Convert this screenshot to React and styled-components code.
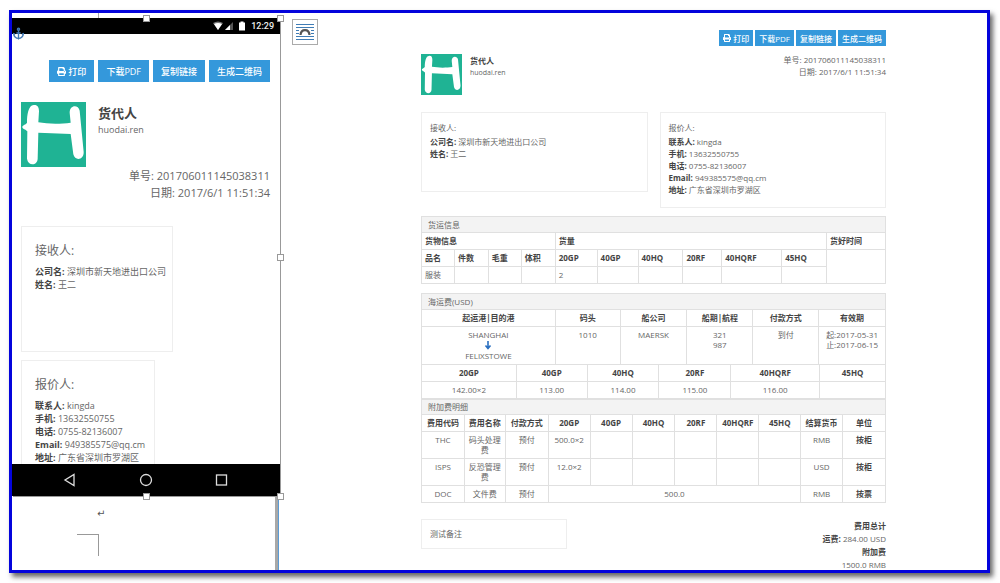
import React from 'react'
import styled, {createGlobalStyle} from 'styled-components'
import {FaPrint} from 'react-icons/fa'
import {Anchor} from 'lucide-react'

const GlobalStyle = createGlobalStyle`
  * {
    box-sizing: border-box;
  }

  body {
    margin: 0;
    background: #fff;
    color: #666;
    font-family: 'Open Sans', 'Noto Sans CJK SC', sans-serif;
    font-size: 8px;
    line-height: 12px;
  }

  p, h1, h2, h3 {
    margin: 0;
  }
`

const Frame = styled.div`
  display: grid;
  grid-template-columns: 268px minmax(0, 1fr);
  grid-template-rows: minmax(0, 1fr);
  height: calc(100vh - 20px);
  margin: 10px 10px 10px 9px;
  border: 3px solid #0404dc;
  box-shadow: 3px 4px 5px rgba(0, 0, 0, 0.6);
  overflow: hidden;
`

/* left column: word document with the phone capture */
const Document = styled.div`
  display: flex;
  flex-direction: column;
  min-height: 0;
`

const PageTop = styled.div`
  flex: 0 0 5px;
  width: 87px;
  border-right: 1px solid #aaa;
`

const Phone = styled.div`
  position: relative;
  flex: 1;
  min-height: 0;
  display: flex;
  flex-direction: column;
  box-shadow: 1px 1px 0 #999;
`

const StatusBar = styled.div`
  display: flex;
  flex: 0 0 16px;
  align-items: center;
  justify-content: flex-end;
  gap: 6px;
  padding-right: 6px;
  background: #000;
  color: #eee;
  font-family: Roboto, sans-serif;
  font-size: 9px;
  font-weight: 500;
`

const Screen = styled.div`
  flex: 1;
  min-height: 0;
  padding: 26px 10px 0 9px;
  overflow: hidden;
`

const NavBar = styled.div`
  display: flex;
  flex: 0 0 32px;
  align-items: center;
  justify-content: space-between;
  padding: 0 52px 0 51px;
  background: #000;
`

const NavButton = styled.button`
  display: flex;
  padding: 0;
  border: none;
  background: none;
`

const Handle = styled.span`
  position: absolute;
  left: ${props => props.$x};
  top: ${props => props.$y};
  width: 7px;
  height: 7px;
  margin: -3px;
  border: 1px solid #999;
  background: #fff;
`

const AnchorMark = styled.span`
  position: absolute;
  left: 0;
  top: 9px;
  display: flex;
  color: #3f78b5;
`

const DocTail = styled.div`
  flex: 0 0 74px;
  padding: 12px 0 0 65px;
  margin-right: 1px;
  color: #555;
  font-family: 'DejaVu Sans', sans-serif;
  font-size: 10px;
  box-shadow: inset -1px 0 #5b9bd5, inset -4px 0 #a8a8a8;
`

const ReturnMark = styled.p`
  padding-left: 20px;
`

const Corner = styled.div`
  width: 22px;
  height: 22px;
  margin-top: 14px;
  border-top: 1px solid #999;
  border-right: 1px solid #999;
`

/* shared by the phone and the sheet */
const Toolbar = styled.div`
  display: flex;
  justify-content: flex-end;
  gap: ${props => props.$large ? '4px' : '2px'};
`

const Button = styled.button`
  display: flex;
  align-items: center;
  gap: 2px;
  height: ${props => props.$large ? '22px' : '16px'};
  padding: 0 ${props => props.$large ? '8px' : '4px'};
  border: none;
  background: #3498db;
  color: #fff;
  font-family: inherit;
  font-size: ${props => props.$large ? '9px' : '8px'};
  font-weight: 500;
  white-space: nowrap;
`

const Brand = styled.div`
  display: flex;
  gap: ${props => props.$large ? '12px' : '8px'};
  margin-top: ${props => props.$large ? '20px' : '0'};

  svg {
    flex: none;
    width: ${props => props.$large ? '65px' : '41px'};
    height: ${props => props.$large ? '65px' : '41px'};
  }

  h1 {
    color: #444;
    font-size: ${props => props.$large ? '13px' : '8px'};
    line-height: ${props => props.$large ? '22px' : '14px'};
  }

  p {
    font-size: ${props => props.$large ? '9px' : '7px'};
    line-height: ${props => props.$large ? '11px' : '10px'};
  }
`

const Meta = styled.div`
  text-align: right;
  font-size: ${props => props.$large ? '11px' : '8px'};
  line-height: ${props => props.$large ? '17px' : '12px'};
`

const Card = styled.section`
  border: 1px solid #eee;
  padding: 9px 8px 11px;

  h2 {
    margin-bottom: 2px;
    font-size: 8px;
    font-weight: 400;
    line-height: 12px;
  }

  b {
    color: #444;
  }
`

const PhoneCard = styled(Card)`
  width: ${props => props.$width};
  min-height: 126px;
  margin-bottom: 8px;
  padding: 15px 13px 12px;
  font-size: 9px;
  line-height: 13px;
  white-space: nowrap;

  h2 {
    margin-bottom: 5px;
    font-size: 12px;
    line-height: 18px;
  }
`

const PhoneMeta = styled(Meta)`
  margin-bottom: 25px;
`

/* right column: the quotation page */
const Main = styled.main`
  display: flex;
  align-items: flex-start;
  padding: 6px 101px 0 12px;
  min-width: 0;
`

const LayoutButton = styled.button`
  display: flex;
  flex: none;
  width: 26px;
  height: 26px;
  padding: 0;
  border: 1px solid #aaa;
  background: #fff;
`

const Sheet = styled.div`
  flex: 1;
  min-width: 0;
  margin-left: 103px;
  padding-top: 11px;
`

const SheetHead = styled.header`
  display: flex;
  justify-content: space-between;
  margin: 8px 0 17px;
`

const Cards = styled.div`
  display: grid;
  grid-template-columns: 1fr 1fr;
  gap: 12px;
  align-items: start;
  margin-bottom: 8px;

  section {
    min-height: 80px;
  }
`

const Panel = styled.section`
  margin-bottom: 9px;
`

const PanelTitle = styled.h3`
  padding: ${props => props.$slim ? '1px 6px' : '2px 6px 1px'};
  border: 1px solid #e0e0e0;
  border-bottom: none;
  background: #f3f3f3;
  font-size: 8px;
  font-weight: 400;
  line-height: 12px;
`

const Table = styled.table`
  width: 100%;
  table-layout: fixed;
  border-collapse: collapse;
  text-align: ${props => props.$left ? 'left' : 'center'};
  line-height: 10px;

  & + & {
    margin-top: -1px;
  }

  th, td {
    height: 17px;
    padding: 3px;
    border: 1px solid #e0e0e0;
    vertical-align: top;
  }

  th {
    color: #444;
    font-weight: 700;
    white-space: nowrap;
  }
`

const Arrow = styled.svg`
  display: block;
  margin: 0 auto;
`

const SheetFoot = styled.footer`
  display: flex;
  justify-content: space-between;
  align-items: flex-start;
  padding-top: 7px;
`

const Note = styled.p`
  width: 146px;
  padding: 8px;
  border: 1px solid #eee;
`

const Totals = styled.div`
  text-align: right;
  line-height: 13px;

  b {
    color: #444;
  }
`

const Logo = () => (
    <svg viewBox="0 0 195 195" role="img" aria-label="货代人">
        <rect width="195" height="195" fill="#1fb394"/>
        <path fill="#fff" d="M38 9C50 8 54 16 54 28L52 61C80 66 120 66 149 62L146 32C146 8 172 7 176 26L188 150C189 174 162 178 157 157L149 96L52 92L50 170C49 192 21 192 18 170L19 88C14 82 4 81 4 75C4 69 14 69 18 62C18 38 22 10 38 9Z"/>
    </svg>
)

const Actions = ({large}) => (
    <Toolbar $large={large}>
        <Button $large={large}><FaPrint/>打印</Button>
        <Button $large={large}>下载PDF</Button>
        <Button $large={large}>复制链接</Button>
        <Button $large={large}>生成二维码</Button>
    </Toolbar>
)

const Company = ({large}) => (
    <Brand $large={large}>
        <Logo/>
        <div>
            <h1>货代人</h1>
            <p>huodai.ren</p>
        </div>
    </Brand>
)

const Fields = ({rows}) => rows.map(([label, value]) => (
    <p key={label}><b>{label}:</b> {value}</p>
))

const Cols = ({widths}) => {
    const total = widths.reduce((a, b) => a + b, 0)
    return (
        <colgroup>
            {widths.map((w, i) => <col key={i} style={{width: `${w / total * 100}%`}}/>)}
        </colgroup>
    )
}

const receiver = [
    ['公司名', '深圳市新天地进出口公司'],
    ['姓名', '王二'],
]

const sender = [
    ['联系人', 'kingda'],
    ['手机', '13632550755'],
    ['电话', '0755-82136007'],
    ['Email', '949385575@qq.cm'],
    ['地址', '广东省深圳市罗湖区'],
]

const boxes = ['20GP', '40GP', '40HQ', '20RF', '40HQRF', '45HQ']
const prices = ['142.00×2', '113.00', '114.00', '115.00', '116.00', '']

const heads = list => list.map(text => <th key={text}>{text}</th>)
const cells = list => list.map((text, i) => <td key={i}>{text}</td>)

const PhoneShot = () => (
    <Phone>
        <StatusBar>
            <svg width="32" height="10" viewBox="0 0 32 10">
                <path d="M0 2Q5 -1 10 2L5 9Z" fill="#777"/>
                <path d="M1 3Q5 1 9 3L5 9Z" fill="#fff"/>
                <path d="M20 1V9H12Z" fill="#555"/>
                <path d="M17 4V9H12Z" fill="#fff"/>
                <path d="M26 1.500H27.500V.5H30.500V1.500H32V9.500H26Z" fill="#fff"/>
            </svg>
            12:29
        </StatusBar>
        <Screen>
            <Actions large/>
            <Company large/>
            <PhoneMeta $large>
                <p>单号: 201706011145038311</p>
                <p>日期: 2017/6/1 11:51:34</p>
            </PhoneMeta>
            <PhoneCard $width="61%">
                <h2>接收人:</h2>
                <Fields rows={receiver}/>
            </PhoneCard>
            <PhoneCard $width="54%">
                <h2>报价人:</h2>
                <Fields rows={sender}/>
            </PhoneCard>
        </Screen>
        <NavBar>
            <NavButton aria-label="back">
                <svg width="13" height="14" viewBox="0 0 13 14" fill="none" stroke="#ddd" strokeWidth="1.300"><path d="M11 1.500V12.500L2 7Z"/></svg>
            </NavButton>
            <NavButton aria-label="home">
                <svg width="14" height="14" viewBox="0 0 14 14" fill="none" stroke="#ddd" strokeWidth="1.300"><circle cx="7" cy="7" r="5.500"/></svg>
            </NavButton>
            <NavButton aria-label="recent">
                <svg width="13" height="14" viewBox="0 0 13 14" fill="none" stroke="#ddd" strokeWidth="1.300"><rect x="1.500" y="2" width="10" height="10"/></svg>
            </NavButton>
        </NavBar>
        <AnchorMark><Anchor size={13} strokeWidth={2.5}/></AnchorMark>
        <Handle $x="50%" $y="0%"/>
        <Handle $x="100%" $y="0%"/>
        <Handle $x="100%" $y="50%"/>
        <Handle $x="100%" $y="100%"/>
        <Handle $x="50%" $y="100%"/>
    </Phone>
)

const Cargo = () => (
    <Panel>
        <PanelTitle>货运信息</PanelTitle>
        <Table $left>
            <Cols widths={[33, 34, 33, 34, 42, 41, 45, 39, 60, 45, 59]}/>
            <tbody>
                <tr>
                    <th colSpan={4}>货物信息</th>
                    <th colSpan={6}>货量</th>
                    <th>货好时间</th>
                </tr>
                <tr>
                    {heads(['品名', '件数', '毛重', '体积', ...boxes])}
                    <td rowSpan={2}/>
                </tr>
                <tr>{cells(['服装', '', '', '', '2', '', '', '', '', ''])}</tr>
            </tbody>
        </Table>
    </Panel>
)

const Freight = () => (
    <Panel>
        <PanelTitle>海运费(USD)</PanelTitle>
        <Table>
            <Cols widths={[134, 65, 67, 66, 66, 67]}/>
            <tbody>
                <tr>{heads(['起运港|目的港', '码头', '船公司', '船期|航程', '付款方式', '有效期'])}</tr>
                <tr>
                    <td>
                        SHANGHAI
                        <Arrow width="8" height="11" viewBox="0 0 8 11">
                            <path d="M4 1V8M1.500 5.500L4 8.500L6.500 5.500" fill="none" stroke="#2a6fc0" strokeWidth="1.600"/>
                        </Arrow>
                        FELIXSTOWE
                    </td>
                    <td>1010</td>
                    <td>MAERSK</td>
                    <td>321<br/>987</td>
                    <td>到付</td>
                    <td>起:2017-05-31<br/>止:2017-06-15</td>
                </tr>
            </tbody>
        </Table>
        <Table>
            <Cols widths={[95, 71, 72, 72, 89, 66]}/>
            <tbody>
                <tr>{heads(boxes)}</tr>
                <tr>{cells(prices)}</tr>
            </tbody>
        </Table>
        <PanelTitle $slim>附加费明细</PanelTitle>
        <Table>
            <Cols widths={[43, 41, 43, 42, 42, 43, 42, 42, 42, 42, 43]}/>
            <tbody>
                <tr>{heads(['费用代码', '费用名称', '付款方式', ...boxes, '结算货币', '单位'])}</tr>
                <tr>
                    {cells(['THC', '码头处理费', '预付', '500.0×2', '', '', '', '', '', 'RMB'])}
                    <th>按柜</th>
                </tr>
                <tr>
                    {cells(['ISPS', '反恐管理费', '预付', '12.0×2', '', '', '', '', '', 'USD'])}
                    <th>按柜</th>
                </tr>
                <tr>
                    {cells(['DOC', '文件费', '预付'])}
                    <td colSpan={6}>500.0</td>
                    <td>RMB</td>
                    <th>按票</th>
                </tr>
            </tbody>
        </Table>
    </Panel>
)

const App = () => (
    <>
        <GlobalStyle/>
        <Frame>
            <Document>
                <PageTop/>
                <PhoneShot/>
                <DocTail>
                    <ReturnMark>↵</ReturnMark>
                    <Corner/>
                </DocTail>
            </Document>
            <Main>
                <LayoutButton aria-label="layout options">
                    <svg width="24" height="24" viewBox="0 0 24 24" fill="none">
                        <path d="M3 4.500H21M3 7.500H21M3 10.500H6M18 10.500H21M3 13.500H6M18 13.500H21M3 16.500H21M3 19.500H21" stroke="#3f7cb5"/>
                        <path d="M7.500 15C8 8.500 16 8.500 16.500 15" stroke="#555" strokeWidth="2.200"/>
                    </svg>
                </LayoutButton>
                <Sheet>
                    <Actions/>
                    <SheetHead>
                        <Company/>
                        <Meta>
                            <p>单号: 201706011145038311</p>
                            <p>日期: 2017/6/1 11:51:34</p>
                        </Meta>
                    </SheetHead>
                    <Cards>
                        <Card>
                            <h2>接收人:</h2>
                            <Fields rows={receiver}/>
                        </Card>
                        <Card>
                            <h2>报价人:</h2>
                            <Fields rows={sender}/>
                        </Card>
                    </Cards>
                    <Cargo/>
                    <Freight/>
                    <SheetFoot>
                        <Note>测试备注</Note>
                        <Totals>
                            <p><b>费用总计</b></p>
                            <p><b>运费:</b> 284.00 USD</p>
                            <p><b>附加费</b></p>
                            <p>1500.0 RMB</p>
                        </Totals>
                    </SheetFoot>
                </Sheet>
            </Main>
        </Frame>
    </>
)

export default App
